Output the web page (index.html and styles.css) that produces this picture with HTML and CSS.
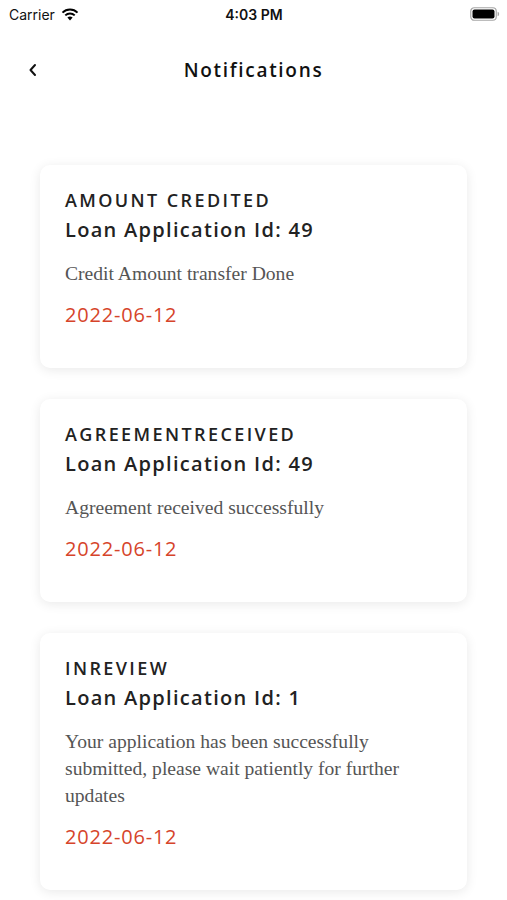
FILE: index.html
```html
<!DOCTYPE html>
<html lang="en">
<head>
  <meta charset="UTF-8" />
  <meta name="viewport" content="width=device-width, initial-scale=1.0"/>
  <title>Notifications</title>
  <link rel="stylesheet" href="styles.css">
</head>
<body>

  <div class="status-bar">
    <div class="status-left">
      <span>Carrier</span>
      <svg class="wifi" width="18" height="13" viewBox="0 0 18 13">
        <path d="M9 12.5 L6.4 9.6 A3.8 3.8 0 0 1 11.6 9.6 Z" fill="#000"/>
        <path d="M4.3 7.4 A6.8 6.8 0 0 1 13.7 7.4" stroke="#000" stroke-width="2" fill="none"/>
        <path d="M1.5 4.6 A10.6 10.6 0 0 1 16.5 4.6" stroke="#000" stroke-width="2" fill="none"/>
      </svg>
    </div>
    <span class="status-time">4:03 PM</span>
    <svg class="battery" width="30" height="14" viewBox="0 0 30 14">
      <rect x="0.75" y="0.75" width="25.5" height="12.5" rx="3.5" fill="none" stroke="#a6a6a6" stroke-width="1.2"/>
      <rect x="2.5" y="2.5" width="22" height="9" rx="2" fill="#000"/>
      <path d="M27.6 4.8 Q29.2 5.2 29.2 7 Q29.2 8.8 27.6 9.2 Z" fill="#a6a6a6"/>
    </svg>
  </div>

  <header class="nav">
    <a class="back" href="#">
      <svg width="10" height="14" viewBox="0 0 10 14">
        <path d="M7 2 L2.5 7 L7 12" stroke="#111" stroke-width="2" fill="none" stroke-linecap="round" stroke-linejoin="round"/>
      </svg>
    </a>
    <h1>Notifications</h1>
  </header>

  <div class="list">
    <div class="card">
      <div class="card-title">AMOUNT CREDITED</div>
      <div class="card-id">Loan Application Id: 49</div>
      <p class="card-text">Credit Amount transfer Done</p>
      <div class="card-date">2022-06-12</div>
    </div>

    <div class="card">
      <div class="card-title">AGREEMENTRECEIVED</div>
      <div class="card-id">Loan Application Id: 49</div>
      <p class="card-text">Agreement received successfully</p>
      <div class="card-date">2022-06-12</div>
    </div>

    <div class="card">
      <div class="card-title">INREVIEW</div>
      <div class="card-id">Loan Application Id: 1</div>
      <p class="card-text">Your application has been successfully submitted, please wait patiently for further updates</p>
      <div class="card-date">2022-06-12</div>
    </div>
  </div>

</body>
</html>
```

FILE: styles.css
```css
:root {
  --text-color: #222222;
  --muted-color: #555555;
  --date-color: #d6442a;
}
* {
  box-sizing: border-box;
}
body {
  margin: 0;
  background: white;
  color: var(--text-color);
  font-family: 'Open Sans', 'Noto Sans', sans-serif;
}
.status-bar {
  height: 28px;
  padding: 0 7px 0 9px;
  display: flex;
  justify-content: space-between;
  align-items: center;
  font-family: 'Inter', 'Liberation Sans', sans-serif;
  font-size: 14px;
  color: #111;
}
.status-left {
  display: flex;
  align-items: center;
  gap: 6px;
  width: 120px;
}
.status-time {
  font-weight: 600;
}
.battery {
  margin-left: 91px;
}
.nav {
  height: 84px;
  display: flex;
  align-items: center;
  justify-content: center;
  position: relative;
}
.back {
  position: absolute;
  left: 28px;
  top: 35px;
  display: flex;
}
.nav h1 {
  margin: 0;
  font-size: 19px;
  font-weight: 600;
  letter-spacing: 1.7px;
  color: #111;
}
.list {
  padding: 53px 40px 20px;
  display: flex;
  flex-direction: column;
  gap: 31px;
}
.card {
  background: white;
  border-radius: 10px;
  padding: 24px 25px 41px;
  box-shadow: 0 2px 12px rgba(0, 0, 0, 0.09);
}
.card-title {
  font-size: 18px;
  line-height: 22px;
  font-weight: 600;
  letter-spacing: 2.4px;
}
.card-id {
  margin-top: 8px;
  font-size: 20px;
  line-height: 22px;
  font-weight: 600;
  letter-spacing: 1.3px;
}
.card-text {
  margin: 19px 0 0;
  font-family: 'Liberation Serif', serif;
  font-size: 19.6px;
  line-height: 27px;
  color: var(--muted-color);
}
.card-date {
  margin-top: 16px;
  font-size: 20px;
  line-height: 24px;
  letter-spacing: 0.8px;
  color: var(--date-color);
}
```
